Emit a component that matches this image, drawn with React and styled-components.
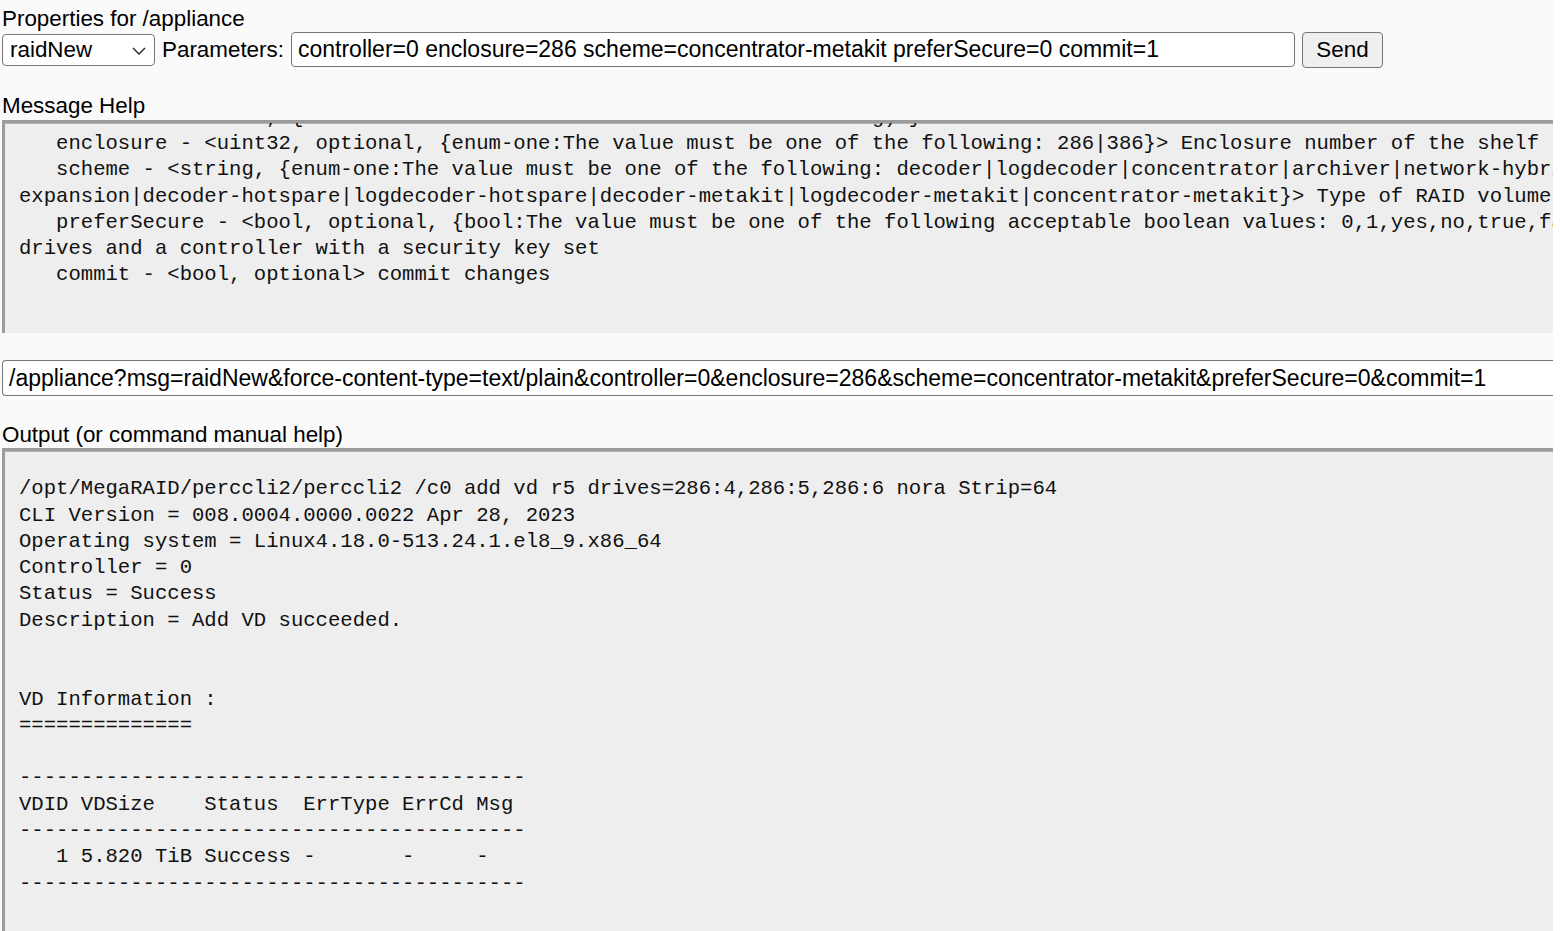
import React from 'react';
import styled, { createGlobalStyle } from 'styled-components';

const GlobalStyle = createGlobalStyle`
  html, body {
    margin: 0;
    padding: 0;
    background: #ffffff;
  }
  * {
    box-sizing: border-box;
  }
`;

const Page = styled.div`
  width: 1553px;
  height: 931px;
  overflow: hidden;
  display: flex;
  flex-direction: column;
  padding: 6px 0 0 2px;
  background: #fafafa;
  color: #000;
  font-family: 'Liberation Sans', Arial, sans-serif;
  font-size: 22.4px;
`;

const Heading = styled.div`
  line-height: ${(p) => p.$lh || 25.7}px;
  margin-top: ${(p) => p.$gap || 0}px;
  white-space: nowrap;
`;

const FormRow = styled.div`
  display: flex;
  align-items: center;
  height: 36px;
  white-space: nowrap;
`;

const SelectWrap = styled.div`
  position: relative;
  width: 153px;
  height: 32px;
  margin-right: 7px;
`;

const Select = styled.select`
  appearance: none;
  width: 100%;
  height: 100%;
  padding: 0 30px 0 7px;
  border: 1px solid #767676;
  border-radius: 4px;
  background: #ffffff;
  color: #000;
  font-family: inherit;
  font-size: 22.4px;
  outline: none;
`;

const Chevron = styled.svg`
  position: absolute;
  right: 9px;
  top: 13px;
  pointer-events: none;
`;

const Label = styled.span`
  margin-right: 7px;
`;

const TextInput = styled.input`
  height: ${(p) => p.$h || 35}px;
  width: ${(p) => (p.$w ? `${p.$w}px` : '100%')};
  padding: 0 6px;
  border: 1px solid #767676;
  border-right: ${(p) => (p.$open ? 'none' : '1px solid #767676')};
  border-radius: ${(p) => (p.$open ? '4px 0 0 4px' : '4px')};
  background: #ffffff;
  color: #000;
  font-family: inherit;
  font-size: 23px;
  outline: none;
`;

const Button = styled.button`
  height: 36px;
  width: 81px;
  margin-left: 7px;
  padding: 0;
  border: 1px solid #767676;
  border-radius: 4px;
  background: #efefef;
  color: #000;
  font-family: inherit;
  font-size: 22.4px;
`;

const Box = styled.div`
  flex: ${(p) => (p.$grow ? '1 1 auto' : '0 0 auto')};
  height: ${(p) => (p.$h ? `${p.$h}px` : 'auto')};
  overflow: hidden;
  background: #eeeeee;
  border-top: 3px solid #9b9b9b;
  border-left: 3px solid #9b9b9b;
  box-shadow: inset 0 1px 0 #b5b5b5;
`;

const Pre = styled.pre`
  margin: ${(p) => p.$offset || 0}px 0 0 0;
  padding: ${(p) => p.$pad || 0}px 0 0 14px;
  font-family: 'Liberation Mono', 'DejaVu Sans Mono', monospace;
  font-size: 20.6px;
  line-height: 26.3px;
  color: #111;
  white-space: pre;
`;

const UrlRow = styled.div`
  margin-top: 27px;
`;

const helpText = [
  '   controller - <int, {the default controller number is the one at tag) }',
  '   enclosure - <uint32, optional, {enum-one:The value must be one of the following: 286|386}> Enclosure number of the shelf to use',
  '   scheme - <string, {enum-one:The value must be one of the following: decoder|logdecoder|concentrator|archiver|network-hybrid|',
  'expansion|decoder-hotspare|logdecoder-hotspare|decoder-metakit|logdecoder-metakit|concentrator-metakit}> Type of RAID volume',
  '   preferSecure - <bool, optional, {bool:The value must be one of the following acceptable boolean values: 0,1,yes,no,true,false}>',
  'drives and a controller with a security key set',
  '   commit - <bool, optional> commit changes',
].join('\n');

const outputText = [
  '/opt/MegaRAID/perccli2/perccli2 /c0 add vd r5 drives=286:4,286:5,286:6 nora Strip=64',
  'CLI Version = 008.0004.0000.0022 Apr 28, 2023',
  'Operating system = Linux4.18.0-513.24.1.el8_9.x86_64',
  'Controller = 0',
  'Status = Success',
  'Description = Add VD succeeded.',
  '',
  '',
  'VD Information :',
  '==============',
  '',
  '-----------------------------------------',
  'VDID VDSize    Status  ErrType ErrCd Msg',
  '-----------------------------------------',
  '   1 5.820 TiB Success -       -     -',
  '-----------------------------------------',
].join('\n');

export default function App() {
  return (
    <>
      <GlobalStyle />
      <Page>
        <Heading>Properties for /appliance</Heading>
        <FormRow>
          <SelectWrap>
            <Select defaultValue="raidNew">
              <option value="raidNew">raidNew</option>
            </Select>
            <Chevron width="14" height="8" viewBox="0 0 14 8">
              <path d="M1 1 L7 7 L13 1" fill="none" stroke="#222" strokeWidth="1.4" />
            </Chevron>
          </SelectWrap>
          <Label>Parameters:</Label>
          <TextInput
            $w={1004}
            readOnly
            value="controller=0 enclosure=286 scheme=concentrator-metakit preferSecure=0 commit=1"
          />
          <Button>Send</Button>
        </FormRow>

        <Heading $gap={24.5} $lh={28}>Message Help</Heading>
        <Box $h={213}>
          <Pre $offset={-18.5}>{helpText}</Pre>
        </Box>

        <UrlRow>
          <TextInput
            $h={36}
            $open
            readOnly
            value="/appliance?msg=raidNew&force-content-type=text/plain&controller=0&enclosure=286&scheme=concentrator-metakit&preferSecure=0&commit=1"
          />
        </UrlRow>

        <Heading $gap={25} $lh={27}>Output (or command manual help)</Heading>
        <Box $grow>
          <Pre $pad={25}>{outputText}</Pre>
        </Box>
      </Page>
    </>
  );
}
